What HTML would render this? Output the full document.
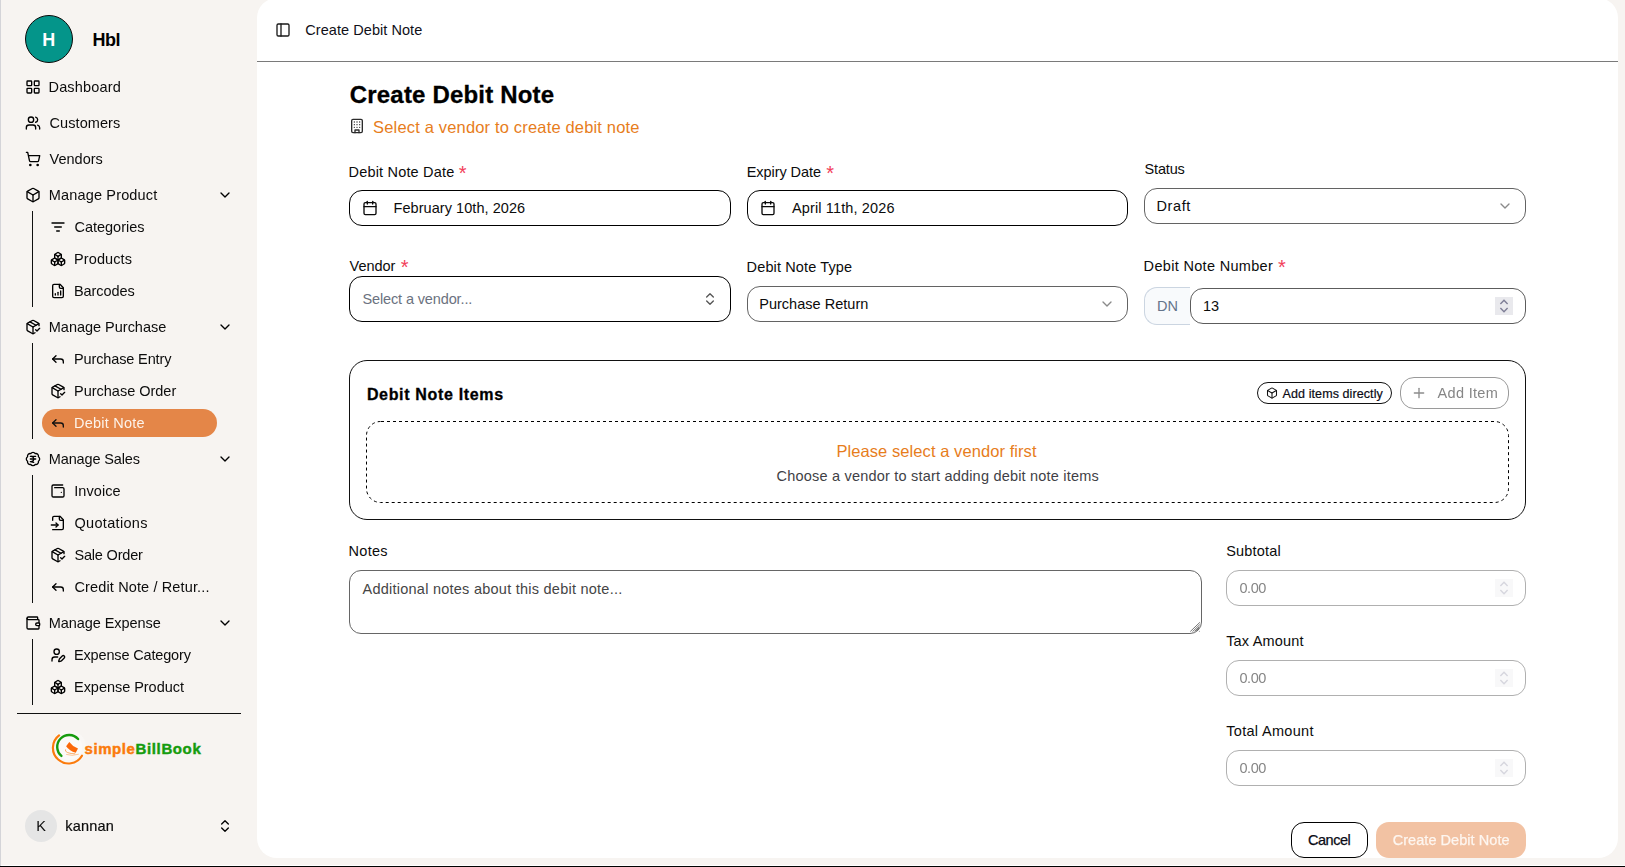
<!DOCTYPE html>
<html><head><meta charset="utf-8"><title>Create Debit Note</title>
<style>
html,body{margin:0;padding:0}
body{width:1625px;height:867px;overflow:hidden;position:relative;background:#f7f4f1;font-family:"Liberation Sans",sans-serif;}
.b{position:absolute}
.ic{position:absolute;display:block;overflow:visible}
.t{position:absolute;white-space:nowrap;line-height:24px;}
.gl{position:absolute;left:0;top:0;width:1625px;height:865px;will-change:transform;}
</style></head>
<body>
<div class="b" style="left:257px;top:-2px;width:1361px;height:860px;background:#fff;border-radius:20px;"></div>
<div class="b" style="left:257px;top:61px;width:1361px;height:1px;background:#7a7a7a;"></div>
<div class="b" style="left:25px;top:15px;width:48px;height:48px;background:#04958a;border:1px solid #0a0a0a;border-radius:50%;box-sizing:border-box;"></div>
<svg class="ic" style="left:25px;top:79px" width="16" height="16" viewBox="0 0 24 24" fill="none" stroke="#000" stroke-width="2" stroke-linecap="round" stroke-linejoin="round"><rect width="7" height="7" x="3" y="3" rx="1"/><rect width="7" height="7" x="14" y="3" rx="1"/><rect width="7" height="7" x="14" y="14" rx="1"/><rect width="7" height="7" x="3" y="14" rx="1"/></svg>
<svg class="ic" style="left:25px;top:115px" width="16" height="16" viewBox="0 0 24 24" fill="none" stroke="#000" stroke-width="2" stroke-linecap="round" stroke-linejoin="round"><path d="M16 21v-2a4 4 0 0 0-4-4H6a4 4 0 0 0-4 4v2"/><circle cx="9" cy="7" r="4"/><path d="M22 21v-2a4 4 0 0 0-3-3.87"/><path d="M16 3.13a4 4 0 0 1 0 7.75"/></svg>
<svg class="ic" style="left:25px;top:151px" width="16" height="16" viewBox="0 0 24 24" fill="none" stroke="#000" stroke-width="2" stroke-linecap="round" stroke-linejoin="round"><circle cx="8" cy="21" r="1"/><circle cx="19" cy="21" r="1"/><path d="M2.05 2.05h2l2.66 12.42a2 2 0 0 0 2 1.58h9.78a2 2 0 0 0 1.95-1.57l1.65-7.43H5.12"/></svg>
<svg class="ic" style="left:25px;top:187px" width="16" height="16" viewBox="0 0 24 24" fill="none" stroke="#000" stroke-width="2" stroke-linecap="round" stroke-linejoin="round"><path d="M21 8a2 2 0 0 0-1-1.73l-7-4a2 2 0 0 0-2 0l-7 4A2 2 0 0 0 3 8v8a2 2 0 0 0 1 1.73l7 4a2 2 0 0 0 2 0l7-4A2 2 0 0 0 21 16Z"/><path d="m3.3 7 8.7 5 8.7-5"/><path d="M12 22V12"/></svg>
<svg class="ic" style="left:25px;top:319px" width="16" height="16" viewBox="0 0 24 24" fill="none" stroke="#000" stroke-width="2" stroke-linecap="round" stroke-linejoin="round"><path d="m16 16 2 2 4-4"/><path d="M21 10V8a2 2 0 0 0-1-1.73l-7-4a2 2 0 0 0-2 0l-7 4A2 2 0 0 0 3 8v8a2 2 0 0 0 1 1.73l7 4a2 2 0 0 0 2 0l2-1.14"/><path d="m7.5 4.27 9 5.15"/><polyline points="3.29 7 12 12 20.71 7"/><line x1="12" x2="12" y1="22" y2="12"/></svg>
<svg class="ic" style="left:25px;top:451px" width="16" height="16" viewBox="0 0 24 24" fill="none" stroke="#000" stroke-width="2" stroke-linecap="round" stroke-linejoin="round"><path d="M3.85 8.62a4 4 0 0 1 4.78-4.77 4 4 0 0 1 6.74 0 4 4 0 0 1 4.78 4.78 4 4 0 0 1 0 6.74 4 4 0 0 1-4.77 4.78 4 4 0 0 1-6.75 0 4 4 0 0 1-4.78-4.77 4 4 0 0 1 0-6.76Z"/><path d="M8 8h8"/><path d="M8 12h8"/><path d="m13 17-5-1h1a4 4 0 0 0 0-8"/></svg>
<svg class="ic" style="left:25px;top:615px" width="16" height="16" viewBox="0 0 24 24" fill="none" stroke="#000" stroke-width="2" stroke-linecap="round" stroke-linejoin="round"><path d="M19 7V4a1 1 0 0 0-1-1H5a2 2 0 0 0 0 4h15a1 1 0 0 1 1 1v4h-3a2 2 0 0 0 0 4h3a1 1 0 0 0 1-1v-2a1 1 0 0 0-1-1"/><path d="M3 5v14a2 2 0 0 0 2 2h15a1 1 0 0 0 1-1v-4"/></svg>
<svg class="ic" style="left:217px;top:187px" width="16" height="16" viewBox="0 0 24 24" fill="none" stroke="#000" stroke-width="2" stroke-linecap="round" stroke-linejoin="round"><path d="m6 9 6 6 6-6"/></svg>
<svg class="ic" style="left:217px;top:319px" width="16" height="16" viewBox="0 0 24 24" fill="none" stroke="#000" stroke-width="2" stroke-linecap="round" stroke-linejoin="round"><path d="m6 9 6 6 6-6"/></svg>
<svg class="ic" style="left:217px;top:451px" width="16" height="16" viewBox="0 0 24 24" fill="none" stroke="#000" stroke-width="2" stroke-linecap="round" stroke-linejoin="round"><path d="m6 9 6 6 6-6"/></svg>
<svg class="ic" style="left:217px;top:615px" width="16" height="16" viewBox="0 0 24 24" fill="none" stroke="#000" stroke-width="2" stroke-linecap="round" stroke-linejoin="round"><path d="m6 9 6 6 6-6"/></svg>
<svg class="ic" style="left:50px;top:219px" width="16" height="16" viewBox="0 0 24 24" fill="none" stroke="#000" stroke-width="2" stroke-linecap="round" stroke-linejoin="round"><path d="M3 6h18"/><path d="M7 12h10"/><path d="M10 18h4"/></svg>
<svg class="ic" style="left:50px;top:251px" width="16" height="16" viewBox="0 0 24 24" fill="none" stroke="#000" stroke-width="2" stroke-linecap="round" stroke-linejoin="round"><path d="M2.97 12.92A2 2 0 0 0 2 14.63v3.24a2 2 0 0 0 .97 1.71l3 1.8a2 2 0 0 0 2.06 0L12 19v-5.5l-5-3-4.03 2.42Z"/><path d="m7 16.5-4.74-2.85"/><path d="m7 16.5 5-3"/><path d="M7 16.5v5.17"/><path d="M12 13.5V19l3.97 2.38a2 2 0 0 0 2.06 0l3-1.8a2 2 0 0 0 .97-1.71v-3.24a2 2 0 0 0-.97-1.71L17 10.5l-5 3Z"/><path d="m17 16.5-5-3"/><path d="m17 16.5 4.74-2.85"/><path d="M17 16.5v5.17"/><path d="M7.97 4.42A2 2 0 0 0 7 6.13v4.37l5 3 5-3V6.13a2 2 0 0 0-.97-1.71l-3-1.8a2 2 0 0 0-2.06 0l-3 1.8Z"/><path d="M12 8 7.26 5.15"/><path d="m12 8 4.74-2.85"/><path d="M12 13.5V8"/></svg>
<svg class="ic" style="left:50px;top:283px" width="16" height="16" viewBox="0 0 24 24" fill="none" stroke="#000" stroke-width="2" stroke-linecap="round" stroke-linejoin="round"><path d="M15 2H6a2 2 0 0 0-2 2v16a2 2 0 0 0 2 2h12a2 2 0 0 0 2-2V7Z"/><path d="M14 2v4a2 2 0 0 0 2 2h4"/><path d="M8 18v-2"/><path d="M12 18v-4"/><path d="M16 18v-6"/></svg>
<svg class="ic" style="left:50px;top:351px" width="16" height="16" viewBox="0 0 24 24" fill="none" stroke="#000" stroke-width="2" stroke-linecap="round" stroke-linejoin="round"><polyline points="9 17 4 12 9 7"/><path d="M20 18v-2a4 4 0 0 0-4-4H4"/></svg>
<svg class="ic" style="left:50px;top:383px" width="16" height="16" viewBox="0 0 24 24" fill="none" stroke="#000" stroke-width="2" stroke-linecap="round" stroke-linejoin="round"><path d="m16 16 2 2 4-4"/><path d="M21 10V8a2 2 0 0 0-1-1.73l-7-4a2 2 0 0 0-2 0l-7 4A2 2 0 0 0 3 8v8a2 2 0 0 0 1 1.73l7 4a2 2 0 0 0 2 0l2-1.14"/><path d="m7.5 4.27 9 5.15"/><polyline points="3.29 7 12 12 20.71 7"/><line x1="12" x2="12" y1="22" y2="12"/></svg>
<svg class="ic" style="left:50px;top:483px" width="16" height="16" viewBox="0 0 24 24" fill="none" stroke="#000" stroke-width="2" stroke-linecap="round" stroke-linejoin="round"><path d="M17 14h.01"/><path d="M7 7h12a2 2 0 0 1 2 2v10a2 2 0 0 1-2 2H5a2 2 0 0 1-2-2V5a2 2 0 0 1 2-2h14"/></svg>
<svg class="ic" style="left:50px;top:515px" width="16" height="16" viewBox="0 0 24 24" fill="none" stroke="#000" stroke-width="2" stroke-linecap="round" stroke-linejoin="round"><path d="M4 22h14a2 2 0 0 0 2-2V7l-5-5H6a2 2 0 0 0-2 2v4"/><path d="M14 2v4a2 2 0 0 0 2 2h4"/><path d="M2 15h10"/><path d="m9 18 3-3-3-3"/></svg>
<svg class="ic" style="left:50px;top:547px" width="16" height="16" viewBox="0 0 24 24" fill="none" stroke="#000" stroke-width="2" stroke-linecap="round" stroke-linejoin="round"><path d="m16 16 2 2 4-4"/><path d="M21 10V8a2 2 0 0 0-1-1.73l-7-4a2 2 0 0 0-2 0l-7 4A2 2 0 0 0 3 8v8a2 2 0 0 0 1 1.73l7 4a2 2 0 0 0 2 0l2-1.14"/><path d="m7.5 4.27 9 5.15"/><polyline points="3.29 7 12 12 20.71 7"/><line x1="12" x2="12" y1="22" y2="12"/></svg>
<svg class="ic" style="left:50px;top:579px" width="16" height="16" viewBox="0 0 24 24" fill="none" stroke="#000" stroke-width="2" stroke-linecap="round" stroke-linejoin="round"><polyline points="9 17 4 12 9 7"/><path d="M20 18v-2a4 4 0 0 0-4-4H4"/></svg>
<svg class="ic" style="left:50px;top:647px" width="16" height="16" viewBox="0 0 24 24" fill="none" stroke="#000" stroke-width="2" stroke-linecap="round" stroke-linejoin="round"><path d="M11.5 15H7a4 4 0 0 0-4 4v2"/><path d="M21.378 16.626a1 1 0 0 0-3.004-3.004l-4.01 4.012a2 2 0 0 0-.506.854l-.837 2.87a.5.5 0 0 0 .62.62l2.87-.837a2 2 0 0 0 .854-.506z"/><circle cx="10" cy="7" r="4"/></svg>
<svg class="ic" style="left:50px;top:679px" width="16" height="16" viewBox="0 0 24 24" fill="none" stroke="#000" stroke-width="2" stroke-linecap="round" stroke-linejoin="round"><path d="M2.97 12.92A2 2 0 0 0 2 14.63v3.24a2 2 0 0 0 .97 1.71l3 1.8a2 2 0 0 0 2.06 0L12 19v-5.5l-5-3-4.03 2.42Z"/><path d="m7 16.5-4.74-2.85"/><path d="m7 16.5 5-3"/><path d="M7 16.5v5.17"/><path d="M12 13.5V19l3.97 2.38a2 2 0 0 0 2.06 0l3-1.8a2 2 0 0 0 .97-1.71v-3.24a2 2 0 0 0-.97-1.71L17 10.5l-5 3Z"/><path d="m17 16.5-5-3"/><path d="m17 16.5 4.74-2.85"/><path d="M17 16.5v5.17"/><path d="M7.97 4.42A2 2 0 0 0 7 6.13v4.37l5 3 5-3V6.13a2 2 0 0 0-.97-1.71l-3-1.8a2 2 0 0 0-2.06 0l-3 1.8Z"/><path d="M12 8 7.26 5.15"/><path d="m12 8 4.74-2.85"/><path d="M12 13.5V8"/></svg>
<div class="b" style="left:32px;top:211px;width:1px;height:96px;background:#111;"></div>
<div class="b" style="left:32px;top:343px;width:1px;height:96px;background:#111;"></div>
<div class="b" style="left:32px;top:475px;width:1px;height:128px;background:#111;"></div>
<div class="b" style="left:32px;top:639px;width:1px;height:66px;background:#111;"></div>
<div class="b" style="left:42px;top:409px;width:175px;height:28px;background:#e48648;border-radius:14px;"></div>
<svg class="ic" style="left:50px;top:415px" width="16" height="16" viewBox="0 0 24 24" fill="none" stroke="#111" stroke-width="2" stroke-linecap="round" stroke-linejoin="round"><polyline points="9 17 4 12 9 7"/><path d="M20 18v-2a4 4 0 0 0-4-4H4"/></svg>
<div class="b" style="left:17px;top:713px;width:224px;height:1px;background:#111;"></div>
<svg class="ic" style="left:48px;top:729px" width="40" height="40" viewBox="0 0 40 40" fill="none">
<circle cx="20.6" cy="18.8" r="17.6" fill="#fff" opacity=".3"/>
<circle cx="21.2" cy="18" r="13" fill="#fff" opacity=".35"/>
<path d="M11.05 6.46 A15.6 15.6 0 1 0 33.98 26.74" stroke="#fb7b0c" stroke-width="2.2" stroke-linecap="round"/>
<path d="M30.1 10.05 A11.9 11.9 0 1 0 13.41 26.92" stroke="#169c0e" stroke-width="2.4" stroke-linecap="round"/>
<path d="M21.3 13 Q24.6 17.6 30 19.6 L27.7 23.8 Q21.6 22.2 18.1 17.3 Z" fill="#fb690a"/>
<path d="M17.6 20.4 Q16.4 22.2 19.6 23.6 Q23 24.8 27.2 24.8" stroke="#fb7b0c" stroke-width=".8" opacity=".75"/>
<path d="M18.2 25.4 Q24 27.4 30.8 25.2" stroke="#fb7b0c" stroke-width=".9" opacity=".45"/>
</svg>
<div class="b" style="left:25px;top:810px;width:32px;height:32px;background:#e5e5e5;border-radius:50%;"></div>
<svg class="ic" style="left:217px;top:818px" width="16" height="16" viewBox="0 0 24 24" fill="none" stroke="#000" stroke-width="2" stroke-linecap="round" stroke-linejoin="round"><path d="m7 15 5 5 5-5"/><path d="m7 9 5-5 5 5"/></svg>
<svg class="ic" style="left:275px;top:22px" width="16" height="16" viewBox="0 0 24 24" fill="none" stroke="#1a1a1a" stroke-width="2" stroke-linecap="round" stroke-linejoin="round"><rect width="18" height="18" x="3" y="3" rx="2"/><path d="M9 3v18"/></svg>
<svg class="ic" style="left:349px;top:117.8px" width="16" height="16" viewBox="0 0 24 24" fill="none" stroke="#2c2c2c" stroke-width="2" stroke-linecap="round" stroke-linejoin="round"><rect width="16" height="20" x="4" y="2" rx="2" ry="2"/><path d="M9 22v-4h6v4"/><path d="M8 6h.01"/><path d="M16 6h.01"/><path d="M12 6h.01"/><path d="M12 10h.01"/><path d="M12 14h.01"/><path d="M16 10h.01"/><path d="M16 14h.01"/><path d="M8 10h.01"/><path d="M8 14h.01"/></svg>
<div class="b" style="left:349px;top:190px;width:382px;height:36px;box-sizing:border-box;border-radius:13px;background:#fff;border:1.3px solid #000;"></div>
<svg class="ic" style="left:362px;top:200px" width="16" height="16" viewBox="0 0 24 24" fill="none" stroke="#0a0a0a" stroke-width="2" stroke-linecap="round" stroke-linejoin="round"><path d="M8 2v4"/><path d="M16 2v4"/><rect width="18" height="18" x="3" y="4" rx="2"/><path d="M3 10h18"/></svg>
<div class="b" style="left:747px;top:190px;width:381px;height:36px;box-sizing:border-box;border-radius:13px;background:#fff;border:1.3px solid #000;"></div>
<svg class="ic" style="left:760px;top:200px" width="16" height="16" viewBox="0 0 24 24" fill="none" stroke="#0a0a0a" stroke-width="2" stroke-linecap="round" stroke-linejoin="round"><path d="M8 2v4"/><path d="M16 2v4"/><rect width="18" height="18" x="3" y="4" rx="2"/><path d="M3 10h18"/></svg>
<div class="b" style="left:1144px;top:188px;width:382px;height:36px;box-sizing:border-box;border-radius:13px;background:#fff;border:1px solid #636363;"></div>
<svg class="ic" style="left:1497px;top:198px" width="16" height="16" viewBox="0 0 24 24" fill="none" stroke="#8a8a8a" stroke-width="2" stroke-linecap="round" stroke-linejoin="round"><path d="m6 9 6 6 6-6"/></svg>
<div class="b" style="left:349px;top:276px;width:382px;height:46px;box-sizing:border-box;border-radius:13px;background:#fff;border:1.3px solid #000;"></div>
<svg class="ic" style="left:702px;top:291px" width="16" height="16" viewBox="0 0 24 24" fill="none" stroke="#555" stroke-width="2" stroke-linecap="round" stroke-linejoin="round"><path d="m7 15 5 5 5-5"/><path d="m7 9 5-5 5 5"/></svg>
<div class="b" style="left:747px;top:286px;width:381px;height:36px;box-sizing:border-box;border-radius:13px;background:#fff;border:1px solid #636363;"></div>
<svg class="ic" style="left:1099px;top:296px" width="16" height="16" viewBox="0 0 24 24" fill="none" stroke="#8a8a8a" stroke-width="2" stroke-linecap="round" stroke-linejoin="round"><path d="m6 9 6 6 6-6"/></svg>
<div class="b" style="left:1144px;top:287px;width:46px;height:38px;box-sizing:border-box;background:#f8fafc;border:1px solid #cbd5e1;border-right:none;border-radius:13px 0 0 13px;"></div>
<div class="b" style="left:1190px;top:288px;width:336px;height:36px;box-sizing:border-box;border-radius:13px;background:#fff;border:1px solid #5c5c5c;"></div>
<div class="b" style="left:1495px;top:297px;width:18px;height:18px;background:#e9e9ed;"></div>
<svg class="ic" style="left:1495px;top:297px" width="18" height="18" viewBox="0 0 18 18" fill="none" stroke="#7e7e96" stroke-width="1.4" stroke-linejoin="miter"><path d="M5.4 6.9 9 3.3 12.6 6.9"/><path d="M5.4 11.1 9 14.7 12.6 11.1"/></svg>
<div class="b" style="left:349px;top:360px;width:1177px;height:160px;box-sizing:border-box;border:1px solid #111;border-radius:18px;"></div>
<div class="b" style="left:1257px;top:382px;width:135px;height:22px;box-sizing:border-box;border:1px solid #111;border-radius:11px;"></div>
<svg class="ic" style="left:1266px;top:386.6px" width="12" height="12" viewBox="0 0 24 24" fill="none" stroke="#111" stroke-width="2.1" stroke-linecap="round" stroke-linejoin="round"><path d="M21 8a2 2 0 0 0-1-1.73l-7-4a2 2 0 0 0-2 0l-7 4A2 2 0 0 0 3 8v8a2 2 0 0 0 1 1.73l7 4a2 2 0 0 0 2 0l7-4A2 2 0 0 0 21 16Z"/><path d="m3.3 7 8.7 5 8.7-5"/><path d="M12 22V12"/></svg>
<div class="b" style="left:1400px;top:376.5px;width:109px;height:32px;box-sizing:border-box;border:1px solid #9a9a9a;border-radius:14px;"></div>
<svg class="ic" style="left:1411px;top:385px" width="16" height="16" viewBox="0 0 24 24" fill="none" stroke="#8c8c8c" stroke-width="2" stroke-linecap="round" stroke-linejoin="round"><path d="M5 12h14"/><path d="M12 5v14"/></svg>
<svg class="ic" style="left:366px;top:421px" width="1143" height="82" viewBox="0 0 1143 82" fill="none"><rect x=".5" y=".5" width="1142" height="81" rx="14" stroke="#000" stroke-width="1" stroke-dasharray="3 3" stroke-dashoffset="-0.5"/></svg>
<div class="b" style="left:349px;top:570px;width:853px;height:64px;box-sizing:border-box;border:1px solid #666;border-radius:12px;"></div>
<svg class="ic" style="left:1186px;top:618px" width="16" height="16" viewBox="0 0 16 16" fill="none" stroke="#666" stroke-width=".9"><path d="M4.3 13.5 13.9 4.3M6.5 13.6 13.8 6.6M8.5 13.4 13.5 8.6M10.3 12.8 13 10.2"/><circle cx="13.4" cy="13.3" r=".5" fill="#888" stroke="none"/></svg>
<div class="b" style="left:1226px;top:570px;width:300px;height:36px;box-sizing:border-box;border:1px solid #b0b0b0;border-radius:13px;"></div>
<div class="b" style="left:1495px;top:579px;width:18px;height:18px;background:#f8f8f9;"></div>
<svg class="ic" style="left:1495px;top:579px" width="18" height="18" viewBox="0 0 18 18" fill="none" stroke="#d6d6de" stroke-width="1.4" stroke-linejoin="miter"><path d="M5.4 6.9 9 3.3 12.6 6.9"/><path d="M5.4 11.1 9 14.7 12.6 11.1"/></svg>
<div class="b" style="left:1226px;top:660px;width:300px;height:36px;box-sizing:border-box;border:1px solid #b0b0b0;border-radius:13px;"></div>
<div class="b" style="left:1495px;top:669px;width:18px;height:18px;background:#f8f8f9;"></div>
<svg class="ic" style="left:1495px;top:669px" width="18" height="18" viewBox="0 0 18 18" fill="none" stroke="#d6d6de" stroke-width="1.4" stroke-linejoin="miter"><path d="M5.4 6.9 9 3.3 12.6 6.9"/><path d="M5.4 11.1 9 14.7 12.6 11.1"/></svg>
<div class="b" style="left:1226px;top:750px;width:300px;height:36px;box-sizing:border-box;border:1px solid #b0b0b0;border-radius:13px;"></div>
<div class="b" style="left:1495px;top:759px;width:18px;height:18px;background:#f8f8f9;"></div>
<svg class="ic" style="left:1495px;top:759px" width="18" height="18" viewBox="0 0 18 18" fill="none" stroke="#d6d6de" stroke-width="1.4" stroke-linejoin="miter"><path d="M5.4 6.9 9 3.3 12.6 6.9"/><path d="M5.4 11.1 9 14.7 12.6 11.1"/></svg>
<div class="b" style="left:1291px;top:822px;width:77px;height:36px;box-sizing:border-box;border:1.3px solid #000;border-radius:13px;background:#fff;"></div>
<div class="b" style="left:1376px;top:822px;width:150px;height:36px;background:#f2c2a3;border-radius:13px;"></div>
<div class="b" style="left:0px;top:865px;width:1625px;height:1px;background:#fff;"></div>
<div class="b" style="left:0px;top:0px;width:1px;height:866px;background:#d4d4d8;"></div>
<div class="b" style="left:0px;top:866px;width:1625px;height:1px;background:#000;"></div>
<span class="t" style="left:42.30px;top:27.76px;font-size:18px;font-weight:700;color:#fff;letter-spacing:0.000px;">H</span>
<span class="t" style="left:92.50px;top:27.76px;font-size:18px;font-weight:700;color:#000;letter-spacing:-0.547px;">Hbl</span>
<span class="t" style="left:84.60px;top:737.00px;font-size:15px;font-weight:700;color:#fb7b0c;letter-spacing:0.525px;-webkit-text-stroke:0.45px #fb7b0c;">simple</span>
<span class="t" style="left:135.60px;top:737.00px;font-size:15px;font-weight:700;color:#169c0e;letter-spacing:0.615px;-webkit-text-stroke:0.45px #169c0e;">BillBook</span>
<span class="t" style="left:305.30px;top:17.98px;font-size:14.5px;color:#101018;letter-spacing:0.057px;">Create Debit Note</span>
<span class="t" style="left:349.80px;top:82.98px;font-size:24px;font-weight:700;color:#000;letter-spacing:0.180px;-webkit-text-stroke:0.3px #000;">Create Debit Note</span>
<span class="t" style="left:373.10px;top:114.88px;font-size:16.5px;color:#e77d1c;letter-spacing:0.168px;">Select a vendor to create debit note</span>
<span class="t" style="left:348.50px;top:159.68px;font-size:14.5px;color:#0c0c0c;letter-spacing:0.186px;">Debit Note Date</span>
<span class="t" style="left:458.70px;top:160.97px;font-size:20px;color:#f2405a;letter-spacing:0.000px;">*</span>
<span class="t" style="left:393.50px;top:195.68px;font-size:14.5px;color:#0c0c0c;letter-spacing:0.060px;">February 10th, 2026</span>
<span class="t" style="left:746.70px;top:159.68px;font-size:14.5px;color:#0c0c0c;letter-spacing:-0.058px;">Expiry Date</span>
<span class="t" style="left:826.20px;top:160.97px;font-size:20px;color:#f2405a;letter-spacing:0.000px;">*</span>
<span class="t" style="left:792.00px;top:195.68px;font-size:14.5px;color:#0c0c0c;letter-spacing:0.131px;">April 11th, 2026</span>
<span class="t" style="left:1144.60px;top:157.38px;font-size:14.5px;color:#0c0c0c;letter-spacing:-0.171px;">Status</span>
<span class="t" style="left:1156.50px;top:193.98px;font-size:14.5px;color:#0c0c0c;letter-spacing:0.602px;">Draft</span>
<span class="t" style="left:349.60px;top:253.68px;font-size:14.5px;color:#0c0c0c;letter-spacing:-0.026px;">Vendor</span>
<span class="t" style="left:400.70px;top:254.97px;font-size:20px;color:#f2405a;letter-spacing:0.000px;">*</span>
<span class="t" style="left:362.50px;top:287.28px;font-size:14.5px;color:#6b7280;letter-spacing:-0.130px;">Select a vendor...</span>
<span class="t" style="left:746.60px;top:254.98px;font-size:14.5px;color:#0c0c0c;letter-spacing:0.128px;">Debit Note Type</span>
<span class="t" style="left:759.20px;top:291.98px;font-size:14.5px;color:#0c0c0c;letter-spacing:0.026px;">Purchase Return</span>
<span class="t" style="left:1143.60px;top:253.68px;font-size:14.5px;color:#0c0c0c;letter-spacing:0.320px;">Debit Note Number</span>
<span class="t" style="left:1278.00px;top:254.97px;font-size:20px;color:#f2405a;letter-spacing:0.000px;">*</span>
<span class="t" style="left:1157.00px;top:293.68px;font-size:14.5px;color:#64748b;letter-spacing:-0.071px;">DN</span>
<span class="t" style="left:1203.00px;top:293.68px;font-size:14.5px;color:#0c0c0c;letter-spacing:-0.064px;">13</span>
<span class="t" style="left:366.90px;top:382.76px;font-size:16px;font-weight:700;color:#000;letter-spacing:0.664px;-webkit-text-stroke:0.3px #000;">Debit Note Items</span>
<span class="t" style="left:1282.60px;top:382.07px;font-size:12.5px;color:#0a0a14;letter-spacing:0.089px;-webkit-text-stroke:0.2px #0a0a14;">Add items directly</span>
<span class="t" style="left:836.50px;top:438.88px;font-size:16.5px;color:#e77d1c;letter-spacing:0.070px;">Please select a vendor first</span>
<span class="t" style="left:776.60px;top:463.98px;font-size:14.5px;color:#3f3f46;letter-spacing:0.200px;">Choose a vendor to start adding debit note items</span>
<span class="t" style="left:348.60px;top:538.68px;font-size:14.5px;color:#0c0c0c;letter-spacing:0.268px;">Notes</span>
<span class="t" style="left:362.50px;top:576.88px;font-size:14.5px;color:#454545;letter-spacing:0.246px;">Additional notes about this debit note...</span>
<span class="t" style="left:1226.20px;top:539.18px;font-size:14.5px;color:#0c0c0c;letter-spacing:0.174px;">Subtotal</span>
<span class="t" style="left:1226.20px;top:629.18px;font-size:14.5px;color:#0c0c0c;letter-spacing:0.174px;">Tax Amount</span>
<span class="t" style="left:1226.20px;top:719.18px;font-size:14.5px;color:#0c0c0c;letter-spacing:0.318px;">Total Amount</span>
<span class="t" style="left:1308.00px;top:828.08px;font-size:14.5px;color:#0a0a14;letter-spacing:-0.463px;-webkit-text-stroke:0.25px #0a0a14;">Cancel</span>
<div class="gl">
<span class="t" style="left:48.50px;top:74.98px;font-size:14.5px;color:#0c0c0c;letter-spacing:0.166px;">Dashboard</span>
<span class="t" style="left:49.50px;top:110.98px;font-size:14.5px;color:#0c0c0c;letter-spacing:0.081px;">Customers</span>
<span class="t" style="left:49.50px;top:146.98px;font-size:14.5px;color:#0c0c0c;letter-spacing:0.024px;">Vendors</span>
<span class="t" style="left:48.80px;top:182.98px;font-size:14.5px;color:#0c0c0c;letter-spacing:0.156px;">Manage Product</span>
<span class="t" style="left:74.50px;top:214.98px;font-size:14.5px;color:#0c0c0c;letter-spacing:-0.019px;">Categories</span>
<span class="t" style="left:74.00px;top:246.98px;font-size:14.5px;color:#0c0c0c;letter-spacing:0.104px;">Products</span>
<span class="t" style="left:74.00px;top:278.98px;font-size:14.5px;color:#0c0c0c;letter-spacing:-0.087px;">Barcodes</span>
<span class="t" style="left:48.80px;top:314.98px;font-size:14.5px;color:#0c0c0c;letter-spacing:-0.016px;">Manage Purchase</span>
<span class="t" style="left:74.00px;top:346.98px;font-size:14.5px;color:#0c0c0c;letter-spacing:-0.129px;">Purchase Entry</span>
<span class="t" style="left:74.00px;top:378.98px;font-size:14.5px;color:#0c0c0c;letter-spacing:-0.009px;">Purchase Order</span>
<span class="t" style="left:74.00px;top:410.98px;font-size:14.5px;color:#fdf3ea;letter-spacing:0.240px;">Debit Note</span>
<span class="t" style="left:48.80px;top:446.98px;font-size:14.5px;color:#0c0c0c;letter-spacing:-0.141px;">Manage Sales</span>
<span class="t" style="left:74.20px;top:478.98px;font-size:14.5px;color:#0c0c0c;letter-spacing:0.087px;">Invoice</span>
<span class="t" style="left:74.50px;top:510.98px;font-size:14.5px;color:#0c0c0c;letter-spacing:0.314px;">Quotations</span>
<span class="t" style="left:74.50px;top:542.98px;font-size:14.5px;color:#0c0c0c;letter-spacing:-0.198px;">Sale Order</span>
<span class="t" style="left:74.50px;top:574.98px;font-size:14.5px;color:#0c0c0c;letter-spacing:0.132px;">Credit Note / Retur...</span>
<span class="t" style="left:48.80px;top:610.98px;font-size:14.5px;color:#0c0c0c;letter-spacing:-0.069px;">Manage Expense</span>
<span class="t" style="left:74.00px;top:642.98px;font-size:14.5px;color:#0c0c0c;letter-spacing:-0.156px;">Expense Category</span>
<span class="t" style="left:74.00px;top:674.98px;font-size:14.5px;color:#0c0c0c;letter-spacing:-0.036px;">Expense Product</span>
<span class="t" style="left:36.20px;top:813.98px;font-size:14.5px;color:#0c0c0c;letter-spacing:0.000px;">K</span>
<span class="t" style="left:65.30px;top:813.98px;font-size:14.5px;color:#0c0c0c;letter-spacing:0.179px;-webkit-text-stroke:0.2px #0c0c0c;">kannan</span>
<span class="t" style="left:1437.60px;top:380.98px;font-size:14.5px;color:#868686;letter-spacing:0.307px;">Add Item</span>
<span class="t" style="left:1239.40px;top:575.58px;font-size:14.5px;color:#868686;letter-spacing:-0.419px;">0.00</span>
<span class="t" style="left:1239.40px;top:665.58px;font-size:14.5px;color:#868686;letter-spacing:-0.419px;">0.00</span>
<span class="t" style="left:1239.40px;top:755.58px;font-size:14.5px;color:#868686;letter-spacing:-0.419px;">0.00</span>
<span class="t" style="left:1392.70px;top:827.98px;font-size:14.5px;color:#fdf6f0;letter-spacing:0.050px;-webkit-text-stroke:0.25px #fdf6f0;">Create Debit Note</span>
</div>
</body></html>
